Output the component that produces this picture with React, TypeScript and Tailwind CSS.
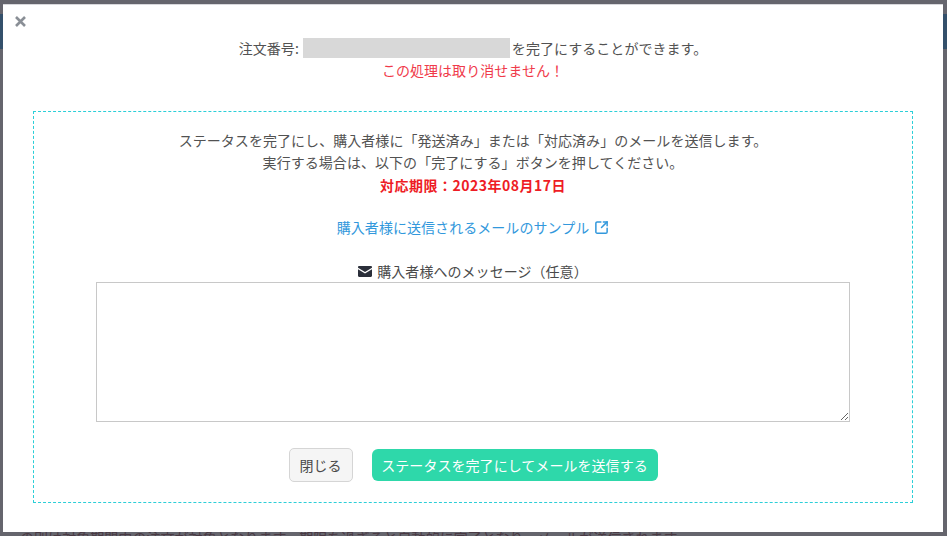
import { SquareArrowOutUpRight } from "lucide-react";

const font = { fontFamily: '"Noto Sans CJK JP", "Noto Sans", sans-serif' };

export default function App() {
  return (
    <div className="relative h-[536px] w-[947px] overflow-hidden bg-[#65656d] pl-[3px] pt-[4px] font-['Noto_Sans_CJK_JP',sans-serif] text-[14px] leading-[22.4px] tracking-[0.05px] text-[#525252]">
      {/* page behind the overlay, only its edges show */}
      <div className="absolute left-0 right-0 top-[14px] h-[35px] bg-[#34506b]" />
      <p className="absolute left-[20px] top-[526px] whitespace-nowrap text-[#4a3a44]">
        の別は対象期間内の注文が対象となります。期限を過ぎると自動的に完了となり、メールが送信されます。
      </p>

      <div className="relative h-[528px] w-[940px] border-t border-[#d8d8dc] bg-white">
        <div className="flex h-[32px] items-start pl-[11px] pt-[10px]">
          <svg width="13" height="13" viewBox="0 0 13 13" className="text-[#8a8f96]">
            <path d="M2 2l9 9M11 2l-9 9" stroke="currentColor" strokeWidth="2.6" />
          </svg>
        </div>

        <div className="flex items-center justify-center">
          <span>注文番号:</span>
          <span className="ml-[4px] mr-[2px] h-[20px] w-[207px] bg-[#d8d8d8]" />
          <span>を完了にすることができます。</span>
        </div>
        <p className="text-center text-[#f03a4a]">この処理は取り消せません！</p>

        <div className="mx-[30px] mt-[29px] h-[392px] border border-dashed border-[#2ccfd8] pt-[17px] text-center">
          <p>ステータスを完了にし、購入者様に「発送済み」または「対応済み」のメールを送信します。</p>
          <p>実行する場合は、以下の「完了にする」ボタンを押してください。</p>
          <p className="font-bold tracking-[0.5px] text-[#ee1c25]">対応期限：2023年08月17日</p>

          <a className="mt-[20px] flex items-center justify-center gap-[5px] text-[#3298dc]">
            購入者様に送信されるメールのサンプル
            <SquareArrowOutUpRight size={15} strokeWidth={2.4} />
          </a>

          <div className="mt-[22px] flex items-center justify-center gap-[5px] text-[#4a4a4a]">
            <svg width="14" height="11" viewBox="0 0 14 11">
              <path
                d="M1.2 0h11.6C13.500 0 14 .5 14 1.200v.5L7 6 0 1.700v-.5C0 .5.500 0 1.200 0zM0 3.200l7 4.300 7-4.300v6.600c0 .7-.5 1.200-1.200 1.200H1.200C.5 11 0 10.500 0 9.800z"
                fill="#2b2f3a"
              />
            </svg>
            <span>購入者様へのメッセージ（任意）</span>
          </div>

          <textarea
            className="mx-auto mt-[-1px] block h-[140px] w-[754px] border border-[#c8c8c8] bg-white"
            style={font}
          />

          <div className="mt-[26px] flex items-center justify-center gap-[19px]">
            <button className="h-[34px] w-[64px] rounded-[5px] border border-[#d5d5d5] bg-[#f5f5f5] text-[#4a4a4a]">
              閉じる
            </button>
            <button className="h-[32px] w-[286px] rounded-[6px] bg-[#2ed8aa] text-white">
              ステータスを完了にしてメールを送信する
            </button>
          </div>
        </div>
      </div>
    </div>
  );
}
